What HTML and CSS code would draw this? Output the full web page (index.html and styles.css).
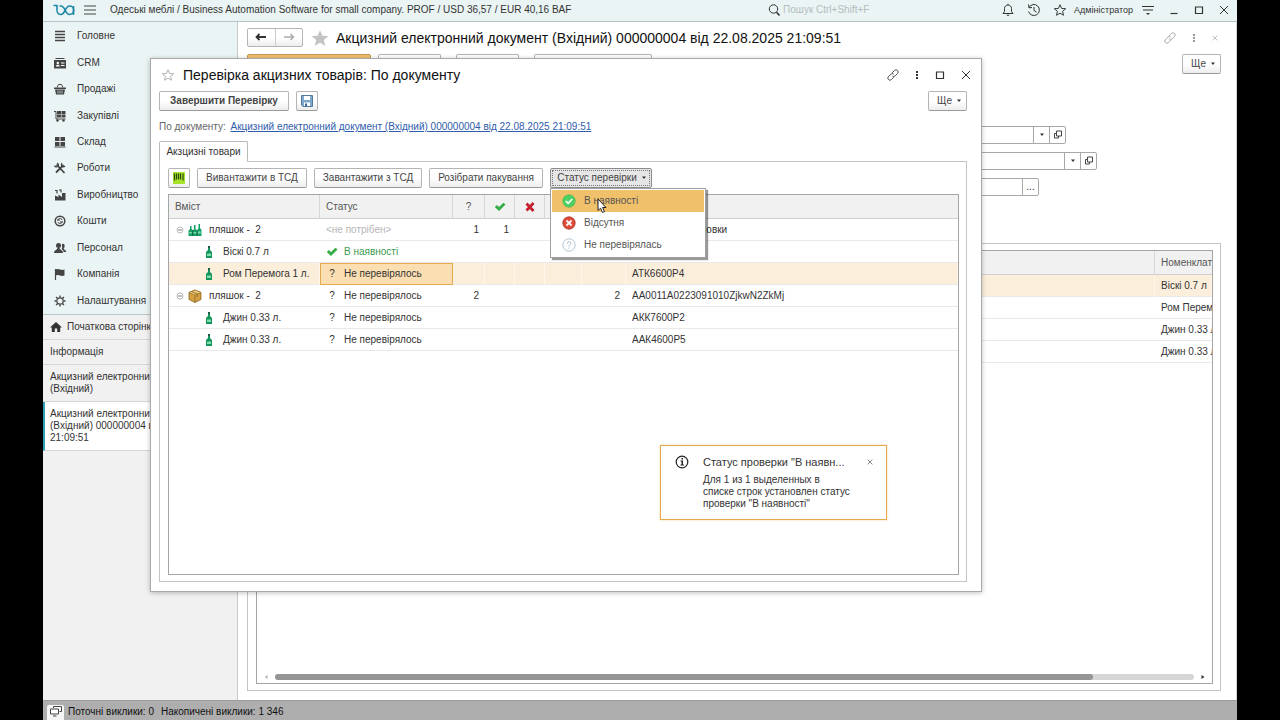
FILE: index.html
```html
<!DOCTYPE html>
<html lang="uk">

<head>
    <meta charset="utf-8">
    <title>Перевірка акцизних товарів</title>
    <link rel="stylesheet" href="styles.css">
</head>

<body>
    <svg class="sprite" aria-hidden="true">
        <symbol id="bottle" viewBox="0 0 8 14">
            <path d="M3 1h2v4l2 2v6H1V7l2-2z" fill="#12945a" />
            <path d="M3 1h2v2H3z" fill="#1d5b45" />
            <path d="M2 8.500h4v2.500H2z" fill="#7fdcae" />
        </symbol>
        <symbol id="bottles" viewBox="0 0 14 14">
            <path d="M2 3h1.500v3L5 7.500V13H.5V7.500L2 6zM6 2h1.500v4L9 7.500V13H4.800V7.500L6 6zM10.500 1H12v4l1.500 2v6H9.300V7l1.200-2z" fill="#12a065" />
            <path d="M4.700 7v6M9.200 7v6" stroke="#0d5138" stroke-width=".8" />
            <path d="M1.200 9h2.600v1.500H1.200zM5.500 9h2.700v1.500H5.500zM10 8.500h2.700v2H10z" fill="#7fdcae" />
        </symbol>
        <symbol id="box" viewBox="0 0 14 14">
            <path d="M1 3.500 7 1l6 2.500v7L7 13.500 1 10.500z" fill="#d3a142" stroke="#8a6424" stroke-width=".8" />
            <path d="M1 3.500 7 6l6-2.500L7 1z" fill="#eccb7c" stroke="#8a6424" stroke-width=".6" />
            <path d="M7 6v7.500M3.500 2.500l6 2.500v3" fill="none" stroke="#8a6424" stroke-width=".8" />
        </symbol>
        <symbol id="check" viewBox="0 0 12 10">
            <path d="M.8 5 3 3l2 2 4.500-4.200L11.500 2.500 5 9z" fill="#35ac45" />
        </symbol>
        <symbol id="minus" viewBox="0 0 8 8">
            <circle cx="4" cy="4" r="3" fill="#fff" stroke="#a9a9a9" stroke-width=".8" />
            <path d="M2.200 4h3.600" stroke="#777" />
        </symbol>
        <symbol id="star" viewBox="0 0 16 16">
            <path d="M8 1l2.100 4.900 5.400.4-4.100 3.500 1.300 5.200L8 12.200 3.300 15l1.300-5.200L.5 6.300l5.400-.4z" />
        </symbol>
        <symbol id="link" viewBox="0 0 14 14">
            <path d="M6 4.500 8.800 1.700a2.400 2.400 0 0 1 3.500 3.500L9.500 8a2.400 2.400 0 0 1-3.300.1M8 9.500l-2.800 2.800a2.400 2.400 0 0 1-3.500-3.500L4.500 6a2.400 2.400 0 0 1 3.300-.1" fill="none" stroke="currentColor" />
        </symbol>
        <symbol id="dots" viewBox="0 0 4 12">
            <path d="M1 2h2v2H1zM1 5h2v2H1zM1 8h2v2H1z" fill="currentColor" />
        </symbol>
        <symbol id="cross" viewBox="0 0 10 10">
            <path d="M1 1l8 8M9 1 1 9" stroke="currentColor" />
        </symbol>
        <symbol id="square" viewBox="0 0 10 10">
            <path d="M1.500 2h7v6.500h-7z" fill="none" stroke="currentColor" stroke-width="1.200" />
        </symbol>
        <symbol id="caret" viewBox="0 0 6 4">
            <path d="M1 .5h4L3 3z" fill="#333" />
        </symbol>
        <symbol id="open" viewBox="0 0 10 10">
            <path d="M3.500 1h5v5h-5zM3.500 3.500H1.500v4.500h4V6" fill="none" stroke="#444" />
        </symbol>
    </svg>

    <div class="app">
        <header class="topbar">
            <svg class="logo" viewBox="0 0 22 12">
                <path d="M.5 1.500H4v5M20.500 2v9" fill="none" stroke="#1b86a8" stroke-width="1.600" />
                <path d="M4 6.500a4 4 0 0 0 4 4c4.200 0 4-8.500 8.500-8.500a4.200 4.200 0 0 1 0 8.500c-4.500 0-4.300-8.500-8.500-8.500H6.500" fill="none" stroke="#1b86a8" stroke-width="1.600" />
            </svg>
            <button class="icon-btn" aria-label="Меню"><svg width="12" height="12" viewBox="0 0 12 12"><path d="M0 2h12M0 6h12M0 10h12" stroke="#444" /></svg></button>
            <span class="app-title">Одеські меблі / Business Automation Software for small company. PROF / USD 36,57 / EUR 40,16 BAF</span>
            <label class="search">
                <svg width="12" height="12" viewBox="0 0 12 12"><circle cx="5.500" cy="5" r="4.200" fill="none" stroke="#333" /><path d="M8.500 8.200 11.500 11.500" stroke="#333" stroke-width="1.600" /></svg>
                <input type="search" placeholder="Пошук Ctrl+Shift+F" aria-label="Пошук">
            </label>
            <div class="top-tools">
                <button class="icon-btn" aria-label="Сповіщення"><svg width="12" height="14" viewBox="0 0 12 14"><path d="M1 10.500h10L9.500 8.500V5.500C9.500 3.500 8 2 6 2S2.500 3.500 2.500 5.500v3zM6 2V.8M4.800 12.200h2.400" fill="none" stroke="#333" /></svg></button>
                <button class="icon-btn" aria-label="Історія"><svg width="14" height="14" viewBox="0 0 14 14"><path d="M2 4.500A5.500 5.500 0 1 1 1.600 8.500M1.500 1.500 2 4.800 5 4.500M7 4v3.500l2.500 1.500" fill="none" stroke="#333" /></svg></button>
                <button class="icon-btn" aria-label="Обране"><svg width="12" height="12" fill="none" stroke="#333" stroke-width="1.300"><use href="#star" /></svg></button>
                <a class="user" href="#">Адміністратор</a>
                <button class="icon-btn" aria-label="Налаштування вікна"><svg width="12" height="12" viewBox="0 0 12 12"><path d="M0 2.500h12M1 6h10" stroke="#333" /><path d="M4 9h4L6 11z" fill="#333" /></svg></button>
            </div>
            <div class="window-tools">
                <button class="icon-btn" aria-label="Згорнути"><svg width="10" height="10" viewBox="0 0 10 10"><path d="M1.500 8.500h7" stroke="#333" stroke-width="1.200" /></svg></button>
                <button class="icon-btn" aria-label="Розгорнути"><svg width="10" height="10"><use href="#square" /></svg></button>
                <button class="icon-btn" aria-label="Закрити"><svg width="10" height="10"><use href="#cross" /></svg></button>
            </div>
        </header>

        <div class="workspace">
            <aside class="sidebar">
                <nav class="sections">
                    <a href="#"><svg viewBox="0 0 12 12"><path d="M1 1.500h10M1 4.500h10M1 7.500h10M1 10.500h10" stroke="#444" stroke-width="1.500" /></svg>Головне</a>
                    <a href="#"><svg viewBox="0 0 12 12"><path d="M1.500 1h9v1h-9zM0 3h12v8.500H0z" fill="#444" /><circle cx="3.800" cy="6" r="1.200" fill="#fff" /><path d="M1.800 9.500c0-2.500 4-2.500 4 0zM7 5.500h3.500v1H7zM7 8h3.500v1H7z" fill="#fff" /></svg>CRM</a>
                    <a href="#"><svg viewBox="0 0 12 12"><path d="M0 4.500h12v1.500H0zM1 6.500h10l-1 5H2z" fill="#444" /><path d="M3 4.500 4.500 1.500h3L9 4.500" fill="none" stroke="#444" /><path d="M4 7.500v3M6 7.500v3M8 7.500v3" stroke="#eef6f6" stroke-width=".7" /></svg>Продажі</a>
                    <a href="#"><svg viewBox="0 0 12 12"><path d="M0 1.500h2v7.500h9.500" fill="none" stroke="#444" /><path d="M3 1h4v3H3zM7.500 1h4v3h-4zM3 4.500h4v3H3zM7.500 4.500h4v3h-4z" fill="#444" /><circle cx="3.500" cy="10.500" r="1.200" fill="#444" /><circle cx="9.500" cy="10.500" r="1.200" fill="#444" /></svg>Закупівлі</a>
                    <a href="#"><svg viewBox="0 0 12 12"><path d="M1 1h4.500v4H1zM6.500 1H11v4H6.500zM1 6h4.500v4H1zM6.500 6H11v4H6.500zM.5 10.500h11v1H.5z" fill="#444" /></svg>Склад</a>
                    <a href="#"><svg viewBox="0 0 12 12"><path d="M2.500 2.500 10.500 11M9.500 3 2 10.500" stroke="#444" stroke-width="1.800" /><path d="M.5 3.500A2 2 0 1 0 3 1M8 1.200a2 2 0 1 0 3 2.800" fill="none" stroke="#444" stroke-width="1.300" /></svg>Роботи</a>
                    <a href="#"><svg viewBox="0 0 12 12"><path d="M1 11.500V6.500L4.500 8V5.500L8 8V4h3.500v7.500z" fill="#444" /><path d="M1 1.500h2v3M5 1h2v2.500" fill="none" stroke="#444" stroke-width="1.200" /></svg>Виробництво</a>
                    <a href="#"><svg viewBox="0 0 12 12"><circle cx="6" cy="6" r="4.800" fill="none" stroke="#444" stroke-width="1.500" /><path d="M3.800 5.500C4 2.800 8 3 8 5M8.200 6.500C8 9.200 4 9 4 7M3 5h3M6 7h3" fill="none" stroke="#444" /></svg>Кошти</a>
                    <a href="#"><svg viewBox="0 0 12 12"><circle cx="4.500" cy="3.500" r="2.500" fill="#444" /><path d="M0 11c0-3 3-3 3.500-5h2C6 8 9 8 9 11zM8 2c3-1 3.500 3 1.500 5 2 1 2.500 1.500 2.500 3H9.500c0-1.500-1-2-2-2.700C9 6 7.500 3 8 2z" fill="#444" /></svg>Персонал</a>
                    <a href="#"><svg viewBox="0 0 12 12"><path d="M1.500 1v11" stroke="#444" stroke-width="1.200" /><path d="M2 1.500c3-1.500 5 1.500 8.500 0v6c-3.500 1.500-5.500-1.500-8.500 0z" fill="#444" /></svg>Компанія</a>
                    <a href="#"><svg viewBox="0 0 12 12"><circle cx="6" cy="6" r="3.200" fill="none" stroke="#444" stroke-width="1.200" /><path d="M6 .5v2M6 9.500v2M.5 6h2M9.500 6h2M2.100 2.100l1.400 1.400M8.500 8.500l1.400 1.400M2.100 9.900l1.400-1.400M8.500 3.500l1.400-1.400" stroke="#444" stroke-width="1.400" /></svg>Налаштування</a>
                </nav>
                <div class="open-pages">
                    <a href="#"><svg viewBox="0 0 12 12"><path d="M0 6.500 6 1l6 5.500h-1.800V11H7.200V7.500H4.800V11H1.800V6.500z" fill="#333" /></svg>Початкова сторінка</a>
                    <a href="#">Інформація</a>
                    <a href="#">Акцизний електронний<br>(Вхідний)</a>
                    <a class="active" href="#">Акцизний електронний<br>(Вхідний) 000000004 від<br>21:09:51</a>
                </div>
            </aside>

            <main class="document">
                <div class="doc-head">
                    <div class="history">
                        <button aria-label="Назад"><svg width="12" height="8" viewBox="0 0 12 8"><path d="M1 4h10M4.500 1 1.500 4l3 3" fill="none" stroke="#333" stroke-width="1.800" /></svg></button>
                        <button aria-label="Вперед"><svg width="12" height="8" viewBox="0 0 12 8"><path d="M1 4h10M7.500 1l3 3-3 3" fill="none" stroke="#aaa" stroke-width="1.500" /></svg></button>
                    </div>
                    <svg class="fav" fill="#c4c4c4"><use href="#star" /></svg>
                    <h1>Акцизний електронний документ (Вхідний) 000000004 від 22.08.2025 21:09:51</h1>
                    <div class="doc-tools">
                        <button class="icon-btn" aria-label="Посилання"><svg width="12" height="12"><use href="#link" /></svg></button>
                        <button class="icon-btn" aria-label="Ще дії"><svg width="4" height="12"><use href="#dots" /></svg></button>
                        <button class="icon-btn" aria-label="Закрити документ"><svg width="6" height="6"><use href="#cross" /></svg></button>
                    </div>
                </div>
                <div class="doc-commands">
                    <button class="btn primary" aria-label="Провести та закрити"></button>
                    <button class="btn w-small" aria-label="Записати"></button>
                    <button class="btn w-small" aria-label="Провести"></button>
                    <button class="btn w-large" aria-label="Перевірка"></button>
                    <button class="btn more">Ще <svg class="caret"><use href="#caret" /></svg></button>
                </div>
                <form class="fields">
                    <div class="field">
                        <input type="text" aria-label="Організація">
                        <button type="button" aria-label="Вибрати"><svg class="caret"><use href="#caret" /></svg></button>
                        <button type="button" aria-label="Відкрити"><svg width="10" height="10"><use href="#open" /></svg></button>
                    </div>
                    <div class="field wide">
                        <input type="text" aria-label="Контрагент">
                        <button type="button" aria-label="Вибрати"><svg class="caret"><use href="#caret" /></svg></button>
                        <button type="button" aria-label="Відкрити"><svg width="10" height="10"><use href="#open" /></svg></button>
                    </div>
                    <div class="field narrow">
                        <input type="text" aria-label="Підстава">
                        <button type="button">...</button>
                    </div>
                </form>
                <section class="doc-panel">
                    <div class="grid-box">
                        <table class="grid doc-grid">
                            <colgroup><col><col class="c-item"></colgroup>
                            <thead>
                                <tr><th></th><th>Номенклатура</th></tr>
                            </thead>
                            <tbody>
                                <tr class="selected"><td></td><td>Віскі 0.7 л</td></tr>
                                <tr><td></td><td>Ром Перемога 1 л.</td></tr>
                                <tr><td></td><td>Джин 0.33 л.</td></tr>
                                <tr><td></td><td>Джин 0.33 л.</td></tr>
                            </tbody>
                        </table>
                        <div class="scroll">
                            <svg width="4" height="6" viewBox="0 0 4 6"><path d="M3.500 1v4L1 3z" fill="#aaa" /></svg>
                            <div class="track"><div class="thumb"></div></div>
                            <svg width="4" height="6" viewBox="0 0 4 6"><path d="M.5 1v4L3.500 3z" fill="#333" /></svg>
                        </div>
                    </div>
                </section>
            </main>
        </div>

        <footer class="statusbar">
            <button aria-label="Вікна"><svg width="14" height="12" viewBox="0 0 14 12"><path d="M4.500 3V1.500h8v5h-2M1.500 4h8v5h-8zM4 11h3.500" fill="#fff" stroke="#444" /></svg></button>
            <span>Поточні виклики: 0</span>
            <span>Накопичені виклики: 1 346</span>
        </footer>

        <section class="dialog" role="dialog" aria-labelledby="dialogTitle">
            <div class="dialog-head">
                <svg class="fav-small" fill="none" stroke="#999"><use href="#star" /></svg>
                <h2 id="dialogTitle">Перевірка акцизних товарів: По документу</h2>
                <div class="dialog-tools">
                    <button class="icon-btn" aria-label="Посилання"><svg width="12" height="12"><use href="#link" /></svg></button>
                    <button class="icon-btn" aria-label="Ще дії"><svg width="4" height="12"><use href="#dots" /></svg></button>
                    <button class="icon-btn" aria-label="Розгорнути"><svg width="10" height="10"><use href="#square" /></svg></button>
                    <button class="icon-btn" aria-label="Закрити"><svg width="10" height="10"><use href="#cross" /></svg></button>
                </div>
            </div>
            <div class="dialog-commands">
                <button class="btn finish">Завершити Перевірку</button>
                <button class="btn square" aria-label="Записати"><svg width="12" height="12" viewBox="0 0 12 12"><path d="M.5.5h11v11H2L.5 10z" fill="#7fa9cc" stroke="#527a9f" /><path d="M3 1h6v4H3zM3 7.500h6V11H3z" fill="#fff" /><path d="M4 8.500h2V11H4z" fill="#3c6690" /></svg></button>
                <button class="btn more">Ще <svg class="caret"><use href="#caret" /></svg></button>
            </div>
            <p class="by-doc">По документу: <a href="#">Акцизний електронний документ (Вхідний) 000000004 від 22.08.2025 21:09:51</a></p>
            <div class="tabs"><button>Акзцизні товари</button></div>
            <div class="tab-panel">
                <div class="toolbar">
                    <button class="btn square" aria-label="Сканувати штрихкод"><svg width="12" height="12" viewBox="0 0 12 12"><path d="M0 0h12v12H0z" fill="#a6e22a" /><path d="M1.500 1.500v7M3.500 1.500v6M5.500 1.500v6M7.500 1.500v6M10 1.500v7" stroke="#2d4a10" stroke-width="1.200" /></svg></button>
                    <button class="btn w-unload">Вивантажити в ТСД</button>
                    <button class="btn w-load">Завантажити з ТСД</button>
                    <button class="btn w-unpack">Розібрати пакування</button>
                    <div class="dropdown">
                        <button class="btn pressed" aria-expanded="true">Статус перевірки <svg class="caret"><use href="#caret" /></svg></button>
                        <div class="menu" role="menu">
                            <button class="hover" role="menuitem"><svg viewBox="0 0 14 14"><circle cx="7" cy="7" r="6.200" fill="#4ed063" stroke="#3bb44f" stroke-width=".6" /><path d="M3.800 7 6.200 9.400l4-4.400" fill="none" stroke="#fff" stroke-width="1.600" /></svg>В наявності</button>
                            <button role="menuitem"><svg viewBox="0 0 14 14"><circle cx="7" cy="7" r="6.200" fill="#dd4b39" stroke="#a83226" stroke-width=".8" /><path d="M4.500 4.500l5 5M9.500 4.500l-5 5" stroke="#fff" stroke-width="1.800" /></svg>Відсутня</button>
                            <button role="menuitem"><svg viewBox="0 0 14 14"><circle cx="7" cy="7" r="6.200" fill="#fff" stroke="#b3c6d3" /><path d="M5.200 5.500c0-2.500 3.700-2.200 3.600 0 0 1.300-1.800 1.300-1.800 3M7 9.500v1.200" fill="none" stroke="#9fb8c8" /></svg>Не перевірялась</button>
                        </div>
                    </div>
                </div>
                <div class="grid-box">
                    <table class="grid check-grid">
                        <colgroup>
                            <col class="c-content"><col class="c-status"><col class="c-unknown"><col class="c-ok"><col class="c-no"><col class="c-extra"><col class="c-total"><col>
                        </colgroup>
                        <thead>
                            <tr>
                                <th>Вміст</th>
                                <th>Статус</th>
                                <th class="mid">?</th>
                                <th class="mid"><svg width="12" height="10"><use href="#check" /></svg></th>
                                <th class="mid"><svg width="12" height="10" viewBox="0 0 12 10"><path d="M2.500 1.500 9.500 9M9.500 1 2.500 8.500" stroke="#c4202d" stroke-width="2.800" /></svg></th>
                                <th></th>
                                <th></th>
                                <th></th>
                            </tr>
                        </thead>
                        <tbody>
                            <tr>
                                <td><div class="group"><svg class="toggle"><use href="#minus" /></svg><svg class="pack"><use href="#bottles" /></svg>пляшок -&nbsp; 2</div></td>
                                <td class="none">&lt;не потрібен&gt;</td>
                                <td class="num">1</td><td class="num">1</td><td></td><td></td><td></td>
                                <td>Товари без упаковки</td>
                            </tr>
                            <tr>
                                <td><div class="item"><svg><use href="#bottle" /></svg>Віскі 0.7 л</div></td>
                                <td><div class="state ok"><svg width="12" height="10"><use href="#check" /></svg>В наявності</div></td>
                                <td></td><td></td><td></td><td></td><td></td><td></td>
                            </tr>
                            <tr class="selected">
                                <td><div class="item"><svg><use href="#bottle" /></svg>Ром Перемога 1 л.</div></td>
                                <td class="current"><div class="state"><span>?</span>Не перевірялось</div></td>
                                <td></td><td></td><td></td><td></td><td></td>
                                <td>АТК6600Р4</td>
                            </tr>
                            <tr>
                                <td><div class="group"><svg class="toggle"><use href="#minus" /></svg><svg class="pack"><use href="#box" /></svg>пляшок -&nbsp; 2</div></td>
                                <td><div class="state"><span>?</span>Не перевірялось</div></td>
                                <td class="num">2</td><td></td><td></td><td></td><td class="num">2</td>
                                <td>АА0011А0223091010ZjkwN2ZkMj</td>
                            </tr>
                            <tr>
                                <td><div class="item"><svg><use href="#bottle" /></svg>Джин 0.33 л.</div></td>
                                <td><div class="state"><span>?</span>Не перевірялось</div></td>
                                <td></td><td></td><td></td><td></td><td></td>
                                <td>АКК7600Р2</td>
                            </tr>
                            <tr>
                                <td><div class="item"><svg><use href="#bottle" /></svg>Джин 0.33 л.</div></td>
                                <td><div class="state"><span>?</span>Не перевірялось</div></td>
                                <td></td><td></td><td></td><td></td><td></td>
                                <td>ААК4600Р5</td>
                            </tr>
                        </tbody>
                    </table>
                </div>
            </div>
        </section>

        <aside class="notice" role="status">
            <svg width="14" height="14" viewBox="0 0 14 14"><circle cx="7" cy="7" r="5.800" fill="#fff" stroke="#222" stroke-width="1.200" /><path d="M6.500 3h1.500v1.500H6.500zM5.500 5.500H8V9.500h1v1H5.500v-1h1V6.500h-1z" fill="#222" /></svg>
            <div class="notice-text">
                <h3>Статус проверки "В наявн...</h3>
                <p>Для 1 из 1 выделенных в<br>списке строк установлен статус<br>проверки "В наявності"</p>
            </div>
            <button class="icon-btn" aria-label="Закрити сповіщення"><svg width="6" height="6"><use href="#cross" /></svg></button>
        </aside>

        <svg class="cursor" viewBox="0 0 10 16"><path d="M1 1v11.500l2.600-2.300L5.500 14.500l2-.9-1.900-4.100H9z" fill="#fff" stroke="#222" /></svg>
    </div>
</body>

</html>
```
FILE: styles.css
```css
* {
    box-sizing: border-box;
}

body {
    margin: 0;
    padding: 0 43px;
    background-color: #000;
    font-family: "Liberation Sans", Arial, sans-serif;
    font-size: 10px;
    line-height: 12px;
    color: #333;
}

h1,
h2,
h3,
p {
    margin: 0;
    font-weight: normal;
}

button,
input {
    font: inherit;
    color: inherit;
}

button {
    padding: 0;
    cursor: pointer;
}

a {
    color: inherit;
    text-decoration: none;
}

svg {
    flex: none;
}

.sprite {
    display: none;
}

.app {
    position: relative;
    display: flex;
    flex-direction: column;
    height: 100vh;
    background-color: #fff;
    overflow: hidden;
}

.icon-btn {
    display: flex;
    align-items: center;
    justify-content: center;
    border: none;
    background: none;
}

.btn {
    display: flex;
    align-items: center;
    justify-content: center;
    height: 20px;
    border: 1px solid #b4b4b4;
    border-bottom-color: #999;
    border-radius: 2px;
    background: linear-gradient(#fff 50%, #ededed);
    color: #444;
    white-space: nowrap;
}

.btn.more {
    width: 39px;
    gap: 4px;
    margin-left: auto;
    padding-left: 4px;
}

.btn.square {
    width: 22px;
}

.caret {
    width: 6px;
    height: 4px;
}

/* top bar */
.topbar {
    display: flex;
    align-items: center;
    height: 22px;
    padding: 0 8px 2px 10px;
    border-bottom: 1px solid #b5c4c4;
    background-color: #eaf4f4;
}

.logo {
    width: 22px;
    height: 12px;
    margin-right: 9px;
}

.app-title {
    margin-left: 14px;
    white-space: nowrap;
}

.search {
    display: flex;
    align-items: center;
    gap: 3px;
    width: 234px;
    margin-left: auto;
}

.search input {
    width: 160px;
    padding: 0;
    border: none;
    background: none;
}

.search input::placeholder {
    color: #b5bcbc;
}

.top-tools {
    display: flex;
    align-items: center;
    gap: 13px;
}

.user {
    margin-left: -5px;
    margin-right: -4px;
    font-size: 9px;
}

.window-tools {
    display: flex;
    gap: 15px;
    margin-left: 15px;
}

/* left side */
.workspace {
    display: flex;
    flex: 1;
    min-height: 0;
}

.sidebar {
    width: 195px;
    border-right: 1px solid #c8c8c8;
    background-color: #f1f1f1;
}

.sections {
    display: grid;
    grid-auto-rows: 1fr;
    height: 292px;
    padding: 1px 0 0 11px;
    background-color: #eaf4f4;
}

.sections a {
    display: flex;
    align-items: center;
    gap: 11px;
}

.sections svg,
.open-pages svg {
    width: 12px;
    height: 12px;
}

.open-pages {
    border-top: 1px solid #b9c4c4;
}

.open-pages a {
    display: flex;
    gap: 5px;
    padding: 6px 7px;
    border-bottom: 1px solid #d6d6d6;
    white-space: nowrap;
}

.open-pages .active {
    padding-left: 5px;
    border-left: 2px solid #2fa3b5;
    background-color: #fff;
}

/* document under the dialog */
.document {
    display: flex;
    flex: 1;
    flex-direction: column;
    min-width: 0;
    padding: 6px 15px 9px 9px;
    border-right: 1px solid #d0d8d8;
}

.doc-head {
    display: flex;
    align-items: center;
    height: 19px;
}

.history {
    display: flex;
    width: 56px;
    height: 19px;
    border: 1px solid #b4b4b4;
    border-radius: 2px;
    background: linear-gradient(#fff 50%, #ededed);
}

.history button {
    flex: 1;
    border: none;
    background: none;
}

.history button + button {
    border-left: 1px solid #ccc;
}

.fav {
    width: 18px;
    height: 18px;
    margin: 0 7px 0 8px;
}

h1,
h2 {
    font-size: 14px;
    line-height: 18px;
    color: #111;
    white-space: nowrap;
}

.doc-tools {
    display: flex;
    gap: 16px;
    margin-left: auto;
    padding-right: 3px;
    color: #999;
}

.doc-commands {
    display: flex;
    gap: 15px;
    margin-top: 7px;
}

.btn.primary {
    width: 124px;
    margin-right: -8px;
    border-color: #c39a4c;
    background: #f0c070;
}

.btn.w-small {
    width: 63px;
}

.btn.w-large {
    width: 118px;
}

.fields {
    display: grid;
    gap: 8px;
    margin-top: 52px;
}

.field {
    display: flex;
    width: 819px;
    height: 18px;
    border: 1px solid #a8a8a8;
    border-radius: 2px;
}

.field.wide {
    width: 850px;
}

.field.narrow {
    width: 792px;
}

.field input {
    flex: 1;
    padding: 0;
    border: none;
}

.field button {
    display: flex;
    align-items: center;
    justify-content: center;
    width: 16px;
    border: none;
    border-left: 1px solid #a8a8a8;
    background: none;
}

.doc-panel {
    display: flex;
    flex: 1;
    margin-top: 47px;
    padding: 6px 7px 6px 8px;
    border: 1px solid #c4c4c4;
}

.grid-box {
    display: flex;
    flex: 1;
    flex-direction: column;
    min-width: 0;
    border: 1px solid #a5a5a5;
    overflow: hidden;
}

.grid {
    width: 100%;
    border-collapse: separate;
    border-spacing: 0;
    table-layout: fixed;
}

.grid th {
    height: 24px;
    padding: 0 0 0 6px;
    border-right: 1px solid #d6d6d6;
    border-bottom: 1px solid #cfcfcf;
    background-color: #f1f1f1;
    font-weight: normal;
    text-align: left;
    color: #555;
}

.grid td {
    height: 22px;
    padding: 0 0 0 6px;
    border-bottom: 1px solid #e9e9e9;
    white-space: nowrap;
    overflow: hidden;
}

.grid th:last-child {
    border-right: none;
}

.grid .selected td {
    border-right: 1px solid #fff7ea;
    background-color: #fbeedb;
}

.c-item {
    width: 57px;
}

.scroll {
    display: flex;
    align-items: center;
    gap: 7px;
    margin-top: auto;
    padding: 0 7px 3px;
}

.track {
    flex: 1;
    height: 6px;
    border-radius: 3px;
    background-color: #d6d6d6;
}

.thumb {
    width: 89%;
    height: 6px;
    border-radius: 3px;
    background-color: #959595;
}

/* status bar */
.statusbar {
    display: flex;
    height: 20px;
    padding: 2px 4px 0;
    border-top: 1px solid #9c9c9c;
    background-color: #aeaeae;
    color: #111;
    line-height: 18px;
}

.statusbar button {
    width: 17px;
    margin: 2px 4px 0 0;
    border: none;
    border-radius: 2px 2px 0 0;
    background-color: #f5f5f5;
}

.statusbar span {
    margin-right: 7px;
}

/* check dialog */
.dialog {
    position: absolute;
    top: 58px;
    right: 255px;
    bottom: 128px;
    left: 107px;
    display: flex;
    flex-direction: column;
    padding: 7px 14px 9px 8px;
    border: 1px solid #a9a9a9;
    background-color: #fff;
    box-shadow: 0 1px 5px rgba(0, 0, 0, 0.25);
}

.dialog-head {
    display: flex;
    align-items: center;
    height: 18px;
}

.fav-small {
    width: 12px;
    height: 12px;
    margin: 0 9px 0 3px;
}

.dialog-tools {
    display: flex;
    align-items: center;
    gap: 16px;
    margin-left: auto;
    margin-right: -4px;
}

.dialog-commands {
    display: flex;
    gap: 7px;
    margin-top: 7px;
}

.finish {
    width: 130px;
    font-weight: bold;
}

.by-doc {
    margin-top: 10px;
    color: #666;
}

.by-doc a {
    margin-left: 2px;
    color: #2f5cab;
    text-decoration: underline;
}

.tabs {
    display: flex;
    margin-top: 8px;
}

.tabs button {
    width: 89px;
    height: 21px;
    margin-bottom: -1px;
    border: 1px solid #b9b9b9;
    border-bottom-color: #fff;
    border-radius: 2px 2px 0 0;
    background-color: #fff;
    z-index: 1;
}

.tab-panel {
    display: flex;
    flex: 1;
    flex-direction: column;
    padding: 6px 7px 6px 8px;
    border: 1px solid #c4c4c4;
}

.toolbar {
    display: flex;
    gap: 7px;
    margin-bottom: 6px;
}

.w-unload {
    width: 110px;
}

.w-load {
    width: 108px;
}

.w-unpack {
    width: 114px;
}

.dropdown {
    position: relative;
}

.btn.pressed {
    width: 102px;
    gap: 4px;
    padding-left: 2px;
    border-color: #8c8c8c;
    outline: 1px dotted #777;
    outline-offset: -3px;
    background: #e6e6e6;
}

.menu {
    position: absolute;
    top: 20px;
    left: 0;
    z-index: 2;
    width: 156px;
    padding: 1px;
    border: 1px solid #a0a0a0;
    background-color: #fff;
    box-shadow: 2px 2px 1px rgba(0, 0, 0, 0.4);
}

.menu button {
    display: flex;
    align-items: center;
    gap: 8px;
    width: 100%;
    height: 22px;
    padding-left: 10px;
    border: none;
    background: none;
    color: #555;
}

.menu .hover {
    background-color: #f0c06a;
}

.menu svg {
    width: 14px;
    height: 14px;
}

.c-content {
    width: 151px;
}

.c-status {
    width: 133px;
}

.c-unknown {
    width: 32px;
}

.c-ok,
.c-no {
    width: 30px;
}

.c-extra {
    width: 37px;
}

.c-total {
    width: 44px;
}

.check-grid .mid {
    padding: 0;
    text-align: center;
    vertical-align: middle;
}

.mid svg {
    display: block;
    margin: 0 auto;
}

.check-grid .num {
    padding: 0 6px 0 0;
    text-align: right;
}

.check-grid .selected .current {
    padding-left: 5px;
    border: 1px solid #e3a94e;
    background-color: #fbdfb2;
}

.group,
.item,
.state {
    display: flex;
    align-items: center;
}

.toggle {
    width: 8px;
    height: 8px;
    margin-right: 4px;
}

.group {
    padding-left: 1px;
}

.pack {
    width: 14px;
    height: 14px;
    margin-right: 7px;
}

.item {
    padding-left: 30px;
}

.item svg {
    width: 8px;
    height: 14px;
    margin-right: 10px;
}

.state svg,
.state span {
    width: 12px;
    margin-right: 6px;
    text-align: center;
}

.ok {
    color: #3c9a50;
}

.none {
    color: #b5b5b5;
}

/* notification */
.notice {
    position: absolute;
    right: 350px;
    bottom: 200px;
    display: flex;
    width: 227px;
    height: 75px;
    padding: 9px 13px 0 14px;
    border: 1px solid #e2aa4c;
    background-color: #fff;
    box-shadow: 0 0 2px rgba(230, 180, 90, 0.6);
}

.notice-text {
    flex: 1;
    margin-left: 14px;
    white-space: nowrap;
}

h3 {
    margin-bottom: 5px;
    font-size: 11px;
    line-height: 14px;
}

.notice .icon-btn {
    height: 14px;
}

.cursor {
    position: absolute;
    top: 198px;
    left: 554px;
    z-index: 3;
    width: 10px;
    height: 16px;
}
```
